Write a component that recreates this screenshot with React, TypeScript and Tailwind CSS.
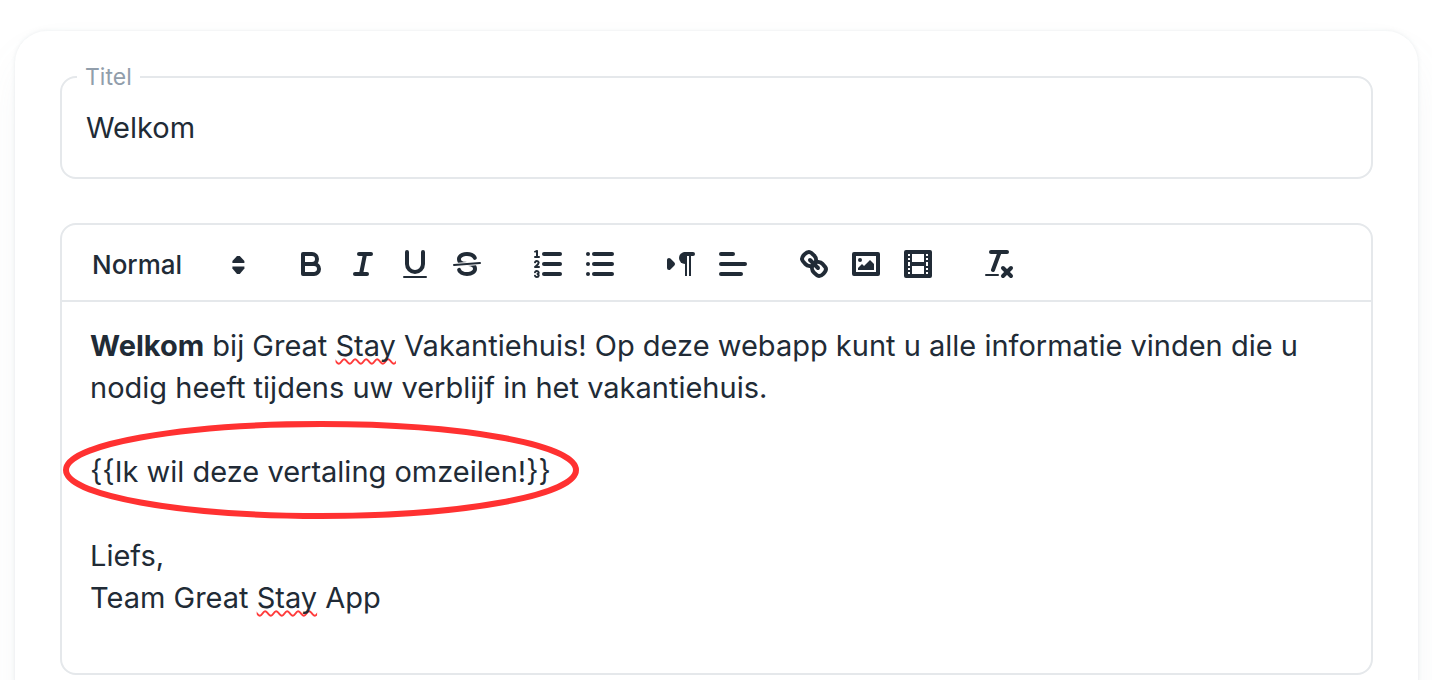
import { useState } from 'react';
import type { ReactNode } from 'react';
import { clsx } from 'clsx';

type Tool = { label: string; icon: ReactNode };

const fill = { fill: 'currentColor', stroke: 'none' };

const TOOL_GROUPS: Tool[][] = [
  [
    {
      label: 'Bold',
      icon: (
        <>
          <path d="M5,4H9.5A2.5,2.5,0,0,1,12,6.5v0A2.5,2.5,0,0,1,9.5,9H5V4Z" />
          <path d="M5,9h5.5A2.5,2.5,0,0,1,13,11.5v0A2.5,2.5,0,0,1,10.5,14H5V9Z" />
        </>
      ),
    },
    {
      label: 'Italic',
      icon: (
        <>
          <line x1="7" x2="13" y1="4" y2="4" />
          <line x1="5" x2="11" y1="14" y2="14" />
          <line x1="8" x2="10" y1="14" y2="4" />
        </>
      ),
    },
    {
      label: 'Underline',
      icon: (
        <>
          <path d="M5,3V9a4.012,4.012,0,0,0,4,4H9a4.012,4.012,0,0,0,4-4V3" />
          <rect {...fill} height="1" rx="0.5" width="12" x="3" y="15" />
        </>
      ),
    },
    {
      label: 'Strike',
      icon: (
        <>
          <line strokeWidth="1" x1="15.5" x2="2.5" y1="8.5" y2="9.5" />
          <path {...fill} d="M9.007,8C6.542,7.791,6,7.519,6,6.5,6,5.792,7.283,5,9,5c1.571,0,2.765.679,2.969,1.309a1,1,0,0,0,1.9-.617C13.356,4.106,11.354,3,9,3,6.2,3,4,4.538,4,6.5a3.2,3.2,0,0,0,.5,1.843Z" />
          <path {...fill} d="M8.984,10C11.457,10.208,12,10.479,12,11.5c0,.708-1.283,1.5-3,1.5-1.571,0-2.765-.679-2.969-1.309a1,1,0,1,0-1.9.617C4.644,13.894,6.646,15,9,15c2.8,0,5-1.538,5-3.5a3.2,3.2,0,0,0-.5-1.843Z" />
        </>
      ),
    },
  ],
  [
    {
      label: 'Ordered list',
      icon: (
        <>
          <line x1="7" x2="15" y1="4" y2="4" />
          <line x1="7" x2="15" y1="9" y2="9" />
          <line x1="7" x2="15" y1="14" y2="14" />
          <line strokeWidth="1" x1="2.5" x2="4.5" y1="5.5" y2="5.5" />
          <path {...fill} d="M3.5,6A0.5,0.5,0,0,1,3,5.5V3.085l-0.276.138A0.5,0.5,0,0,1,2.053,3c-0.124-.247-0.023-0.324.224-0.447l1-.5A0.5,0.5,0,0,1,4,2.5v3A0.5,0.5,0,0,1,3.5,6Z" />
          <path strokeWidth="1" d="M4.5,10.5h-2c0-.234,1.85-1.076,1.85-2.234A0.959,0.959,0,0,0,2.5,8.156" />
          <path strokeWidth="1" d="M2.5,14.846a0.959,0.959,0,0,0,1.85-.109A0.7,0.7,0,0,0,3.75,14a0.688,0.688,0,0,0,.6-0.736,0.959,0.959,0,0,0-1.85-.109" />
        </>
      ),
    },
    {
      label: 'Bullet list',
      icon: (
        <>
          <line x1="6" x2="15" y1="4" y2="4" />
          <line x1="6" x2="15" y1="9" y2="9" />
          <line x1="6" x2="15" y1="14" y2="14" />
          <line x1="3" x2="3" y1="4" y2="4" />
          <line x1="3" x2="3" y1="9" y2="9" />
          <line x1="3" x2="3" y1="14" y2="14" />
        </>
      ),
    },
  ],
  [
    {
      label: 'Text direction',
      icon: (
        <>
          <polygon fill="currentColor" points="3 11 5 9 3 7 3 11" />
          <line x1="15" x2="11" y1="4" y2="4" />
          <path {...fill} d="M11,3a3,3,0,0,0,0,6h1V3H11Z" />
          <rect {...fill} height="11" width="1" x="11" y="4" />
          <rect {...fill} height="11" width="1" x="13" y="4" />
        </>
      ),
    },
    {
      label: 'Align',
      icon: (
        <>
          <line x1="3" x2="15" y1="9" y2="9" />
          <line x1="3" x2="13" y1="14" y2="14" />
          <line x1="3" x2="9" y1="4" y2="4" />
        </>
      ),
    },
  ],
  [
    {
      label: 'Link',
      icon: (
        <>
          <line x1="7" x2="11" y1="7" y2="11" />
          <path d="M8.9,4.577a3.476,3.476,0,0,1,.36,4.679A3.476,3.476,0,0,1,4.577,8.9C3.185,7.5,2.035,6.4,4.217,4.217S7.5,3.185,8.9,4.577Z" />
          <path d="M13.423,9.1a3.476,3.476,0,0,0-4.679-.36,3.476,3.476,0,0,0,.36,4.679c1.392,1.392,2.5,2.542,4.679.36S14.815,10.5,13.423,9.1Z" />
        </>
      ),
    },
    {
      label: 'Image',
      icon: (
        <>
          <rect height="10" width="12" x="3" y="4" />
          <circle {...fill} cx="6" cy="7" r="1" />
          <polyline {...fill} points="5 12 5 11 7 9 8 10 11 7 13 9 13 12 5 12" />
        </>
      ),
    },
    {
      label: 'Video',
      icon: (
        <>
          <rect height="12" width="12" x="3" y="3" />
          <rect {...fill} height="12" width="1" x="5" y="3" />
          <rect {...fill} height="12" width="1" x="12" y="3" />
          <rect {...fill} height="2" width="8" x="5" y="8" />
          {[5, 7, 10, 12].map((y) => (
            <g key={y} {...fill}>
              <rect height="1" width="3" x="3" y={y} />
              <rect height="1" width="3" x="12" y={y} />
            </g>
          ))}
        </>
      ),
    },
  ],
  [
    {
      label: 'Clear formatting',
      icon: (
        <>
          <line x1="5" x2="13" y1="3" y2="3" />
          <line x1="6" x2="9.35" y1="12" y2="3" />
          <line x1="11" x2="15" y1="11" y2="15" />
          <line x1="15" x2="11" y1="11" y2="15" />
          <rect {...fill} height="1" rx="0.5" width="7" x="2" y="14" />
        </>
      ),
    },
  ],
];

function ToolIcon({ children, className }: { children: ReactNode; className?: string }) {
  return (
    <svg
      viewBox="0 0 18 18"
      className={clsx('size-9', className)}
      fill="none"
      stroke="currentColor"
      strokeWidth="2"
      strokeLinecap="round"
      strokeLinejoin="round"
      aria-hidden="true"
    >
      {children}
    </svg>
  );
}

function TitleField() {
  const [title, setTitle] = useState('Welkom');

  return (
    <fieldset className="min-w-0 rounded-2xl border-2 border-[#e5e8eb] pb-3">
      <legend className="ml-[15px] px-2 text-[23px] leading-6 text-[#919eab]">
        <label htmlFor="title">Titel</label>
      </legend>
      <input
        id="title"
        type="text"
        value={title}
        onChange={(e) => setTitle(e.target.value)}
        className="block h-[76px] w-full bg-transparent px-6 text-[29px] outline-none"
      />
    </fieldset>
  );
}

function Toolbar() {
  return (
    <div role="toolbar" aria-label="Opmaak" className="flex flex-wrap items-center gap-[29px] border-b-2 border-[#e5e8eb] px-[11px] pt-[13px] pb-[10px]">
      <div className="relative flex w-[183px] items-center">
        <select
          aria-label="Tekststijl"
          defaultValue="normal"
          className="h-[52px] w-full appearance-none bg-transparent pl-[19px] text-[26px] font-medium outline-none"
        >
          <option value="normal">Normal</option>
        </select>
        <ToolIcon className="pointer-events-none absolute right-0">
          <polygon {...fill} points="6.2 8.5 12.2 8.5 12.2 7.5 9.9 5 8.5 5 6.2 7.5" />
          <polygon {...fill} points="6.2 10.2 12.2 10.2 12.2 11.2 9.9 14 8.5 14 6.2 11.2" />
        </ToolIcon>
      </div>
      {TOOL_GROUPS.map((group) => (
        <div key={group[0].label} className="flex">
          {group.map((tool) => (
            <button key={tool.label} type="button" aria-label={tool.label} className="flex h-[52px] w-[52px] items-center justify-center">
              <ToolIcon>{tool.icon}</ToolIcon>
            </button>
          ))}
        </div>
      ))}
    </div>
  );
}

function Misspelled({ children }: { children: ReactNode }) {
  return (
    <span className="underline decoration-[#ff3b3b] decoration-wavy decoration-2 underline-offset-2 [text-decoration-skip-ink:none]">
      {children}
    </span>
  );
}

export default function App() {
  return (
    <div className="overflow-hidden bg-white pt-[31px] pr-[14px] pl-[15px] font-['Inter',sans-serif] text-[#212b36]">
      <main className="flex flex-col gap-11 rounded-[32px] px-[45px] pt-[34px] pb-12 shadow-[0_0_4px_rgba(145,158,171,0.2),0_24px_48px_-8px_rgba(145,158,171,0.1)]">
        <TitleField />

        <section className="rounded-2xl border-2 border-[#e5e8eb]">
          <Toolbar />
          <div
            role="textbox"
            aria-multiline="true"
            aria-label="Inhoud"
            contentEditable
            suppressContentEditableWarning
            spellCheck={false}
            className="px-7 pt-[23px] pb-[54px] text-[29px] leading-[42px] outline-none"
          >
            <p>
              <strong className="font-bold">Welkom</strong> bij Great <Misspelled>Stay</Misspelled> Vakantiehuis! Op deze
              webapp kunt u alle informatie vinden die u nodig heeft tijdens uw verblijf in het vakantiehuis.
            </p>
            <p><br /></p>
            <p className="relative">
              {'{{Ik wil deze vertaling omzeilen!}}'}
              {/* Red marker around the placeholder */}
              <svg viewBox="0 0 518 98" className="pointer-events-none absolute -top-[30px] -left-7 h-[98px] w-[518px]" fill="none" aria-hidden="true">
                <ellipse cx="259" cy="49" rx="255" ry="46" stroke="#ff3131" strokeWidth="6" />
              </svg>
            </p>
            <p><br /></p>
            <p>Liefs,</p>
            <p>
              Team Great <Misspelled>Stay</Misspelled> App
            </p>
          </div>
        </section>
      </main>
    </div>
  );
}
